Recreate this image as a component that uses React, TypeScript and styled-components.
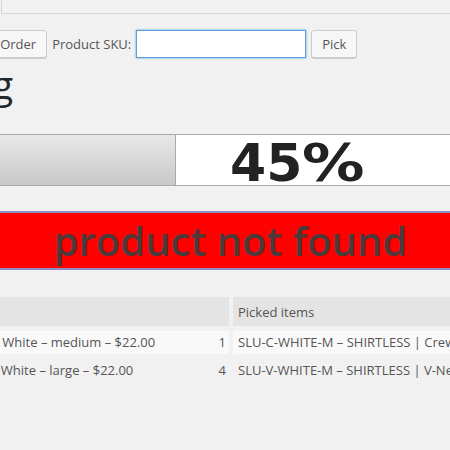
import styled, { createGlobalStyle } from 'styled-components';

const GlobalStyle = createGlobalStyle`
  body {
    margin: 0;
    background: #f1f1f1;
  }
`

const Page = styled.div`
  width: 450px;
  height: 450px;
  overflow: hidden;
  background: #f1f1f1;
  font-family: "Open Sans", "Liberation Sans", sans-serif;
  font-size: 13px;
  color: #555;
`

const TopPanel = styled.div`
  margin-left: 1px;
  height: 13px;
  border-left: 1px solid #d6d6d6;
  border-bottom: 1px solid #d6d6d6;
`

// the page is wider than the window, its left part is scrolled out of view
const Content = styled.div`
  margin-left: -162px;
  width: 785px;
`

const Toolbar = styled.div`
  display: flex;
  align-items: center;
  gap: 5px;
  margin-top: 16px;
  padding-left: 118px;
`

const Button = styled.button`
  height: 28px;
  padding: 0 10px 1px;
  background: #f7f7f7;
  border: 1px solid #ccc;
  border-radius: 3px;
  box-shadow: 0 1px 0 #ccc;
  color: #555;
  font-family: inherit;
  font-size: 13px;
  line-height: 26px;
  white-space: nowrap;
`

const Label = styled.label`
  color: #555;
  white-space: nowrap;
`

const SkuInput = styled.input`
  box-sizing: border-box;
  width: 170px;
  height: 28px;
  margin: 0;
  border: 1px solid #5b9dd9;
  border-radius: 0;
  box-shadow: 0 0 2px rgba(30, 140, 190, 0.8);
  background: #fff;
  outline: none;
`

const Heading = styled.h1`
  margin: 2px 0 0;
  padding-left: 51px;
  font-size: 38px;
  font-weight: 400;
  line-height: 49px;
  color: #23282d;
`

const ProgressBar = styled.div`
  box-sizing: border-box;
  display: flex;
  width: 751px;
  height: 52px;
  margin-top: 25px;
  border: 1px solid #aaa;
  background: #fff;
`

const ProgressFill = styled.div`
  box-sizing: border-box;
  border-right: 1px solid #aaa;
  background: linear-gradient(#e8e8e8, #c8c8c8);
`

const ProgressLabel = styled.div`
  flex: 1;
  padding-left: 54px;
  font-family: "DejaVu Sans", Verdana, sans-serif;
  font-weight: 700;
  font-size: 52px;
  line-height: 56px;
  color: #222;
  white-space: nowrap;
`

const Percent = styled.span`
  display: inline-block;
  transform: scaleX(1.2);
  transform-origin: left center;
`

const Notice = styled.div`
  box-sizing: border-box;
  height: 59px;
  margin-top: 25px;
  border-top: 2px solid #8d8dc5;
  border-bottom: 2px solid #8d8dc5;
  background: #ff0000;
  color: #4a3a3a;
  font-size: 40px;
  font-weight: 600;
  line-height: 55px;
  text-align: center;
`

const Table = styled.table`
  width: 100%;
  margin-top: 22px;
  table-layout: fixed;
  border-spacing: 4px 5px;
`

const HeadCell = styled.th`
  height: 29px;
  padding: 0 5px;
  background: #e4e4e4;
  font-weight: 400;
  text-align: left;
  color: #555;
  white-space: nowrap;
  overflow: hidden;
`

const Row = styled.tr<{ $striped?: boolean }>`
  background: ${props => (props.$striped ? '#f9f9f9' : 'transparent')};
`

const Cell = styled.td`
  height: 23px;
  padding: 0 3px 0 5px;
  line-height: 23px;
  white-space: nowrap;
  overflow: hidden;
`

const ItemLine = styled.div`
  display: flex;
  justify-content: space-between;
`

const ItemName = styled.span`
  overflow: hidden;
`

const Qty = styled.span`
  flex-shrink: 0;
`

const items = [
  {
    name: 'SHIRTLESS | Crew Neck – White – medium – $22.00',
    qty: 1,
    picked: 'SLU-C-WHITE-M – SHIRTLESS | Crew Neck – White – medium',
  },
  {
    name: 'SHIRTLESS | V-neck tee – White – large – $22.00',
    qty: 4,
    picked: 'SLU-V-WHITE-M – SHIRTLESS | V-Neck – White – large',
  },
]

const progress = 45

function App() {
  return (
    <Page>
      <GlobalStyle />
      <TopPanel />
      <Content>
        <Toolbar>
          <Button>Load Order</Button>
          <Label htmlFor="sku">Product SKU:</Label>
          <SkuInput id="sku" />
          <Button>Pick</Button>
        </Toolbar>
        <Heading>Picking</Heading>
        <ProgressBar>
          <ProgressFill style={{ width: `${progress}%` }} />
          <ProgressLabel>
            {progress}<Percent>%</Percent>
          </ProgressLabel>
        </ProgressBar>
        <Notice>product not found</Notice>
        <Table>
          <colgroup>
            <col style={{ width: 387 }} />
            <col />
          </colgroup>
          <thead>
            <tr>
              <HeadCell>Items</HeadCell>
              <HeadCell>Picked items</HeadCell>
            </tr>
          </thead>
          <tbody>
            {items.map((item, index) => (
              <Row key={item.picked} $striped={index % 2 === 0}>
                <Cell>
                  <ItemLine>
                    <ItemName>{item.name}</ItemName>
                    <Qty>{item.qty}</Qty>
                  </ItemLine>
                </Cell>
                <Cell>{item.picked}</Cell>
              </Row>
            ))}
          </tbody>
        </Table>
      </Content>
    </Page>
  );
}

export default App;
